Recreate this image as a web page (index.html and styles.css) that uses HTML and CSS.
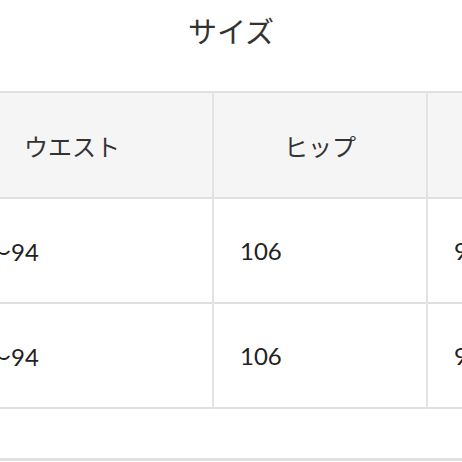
FILE: index.html
```html
<!DOCTYPE html>
<html lang="ja">
<head>
<meta charset="utf-8">
<link rel="stylesheet" href="styles.css">
</head>
<body>
<div class="page">
  <h2 class="title">サイズ</h2>
  <div class="table-wrap">
    <table class="size-table">
      <colgroup>
        <col class="c1">
        <col class="c2">
        <col class="c3">
      </colgroup>
      <thead>
        <tr>
          <th>ウエスト</th>
          <th>ヒップ</th>
          <th></th>
        </tr>
      </thead>
      <tbody>
        <tr>
          <td class="first">〜94</td>
          <td>106</td>
          <td>9</td>
        </tr>
        <tr>
          <td class="first">〜94</td>
          <td>106</td>
          <td>9</td>
        </tr>
      </tbody>
    </table>
  </div>
  <div class="next"></div>
</div>
</body>
</html>
```
FILE: styles.css
```css
html, body {
  margin: 0;
  padding: 0;
  background: #fff;
}
body {
  font-family: Lato, "Noto Sans CJK JP", sans-serif;
  color: #333;
  width: 462px;
  height: 462px;
  overflow: hidden;
}
.page {
  display: flex;
  flex-direction: column;
}
.title {
  margin: 0;
  padding-top: 10px;
  height: 81px;
  font-family: "Noto Sans CJK JP", sans-serif;
  font-size: 29px;
  font-weight: 400;
  line-height: 40px;
  text-align: center;
  color: #333;
}
.table-wrap {
  overflow: hidden;
  width: 462px;
}
.size-table {
  margin-left: -70px;
  border-collapse: collapse;
  table-layout: fixed;
  width: 710px;
  border-top: 2px solid #e0e0e0;
  border-bottom: 2px solid #e0e0e0;
}
.c1 { width: 282px; }
.c2 { width: 214px; }
.c3 { width: 214px; }
.size-table th,
.size-table td {
  border-left: 2px solid #e3e3e3;
  border-right: 2px solid #e3e3e3;
  padding: 0;
  box-sizing: border-box;
  vertical-align: middle;
  font-size: 24px;
  font-weight: 400;
  white-space: nowrap;
}
.size-table th {
  height: 106px;
  background: #f5f5f5;
  text-align: center;
  font-family: "Noto Sans CJK JP", sans-serif;
  font-size: 24px;
  color: #333;
  border-bottom: 2px solid #e0e0e0;
}
.size-table td {
  height: 105px;
  text-align: left;
  padding-left: 26px;
  color: #222;
}
.size-table tbody tr + tr td {
  border-top: 2px solid #e0e0e0;
}
.size-table td.first {
  padding-left: 55px;
}
.next {
  margin-top: 49px;
  height: 10px;
  border-top: 3px solid #e0e0e0;
}
```
